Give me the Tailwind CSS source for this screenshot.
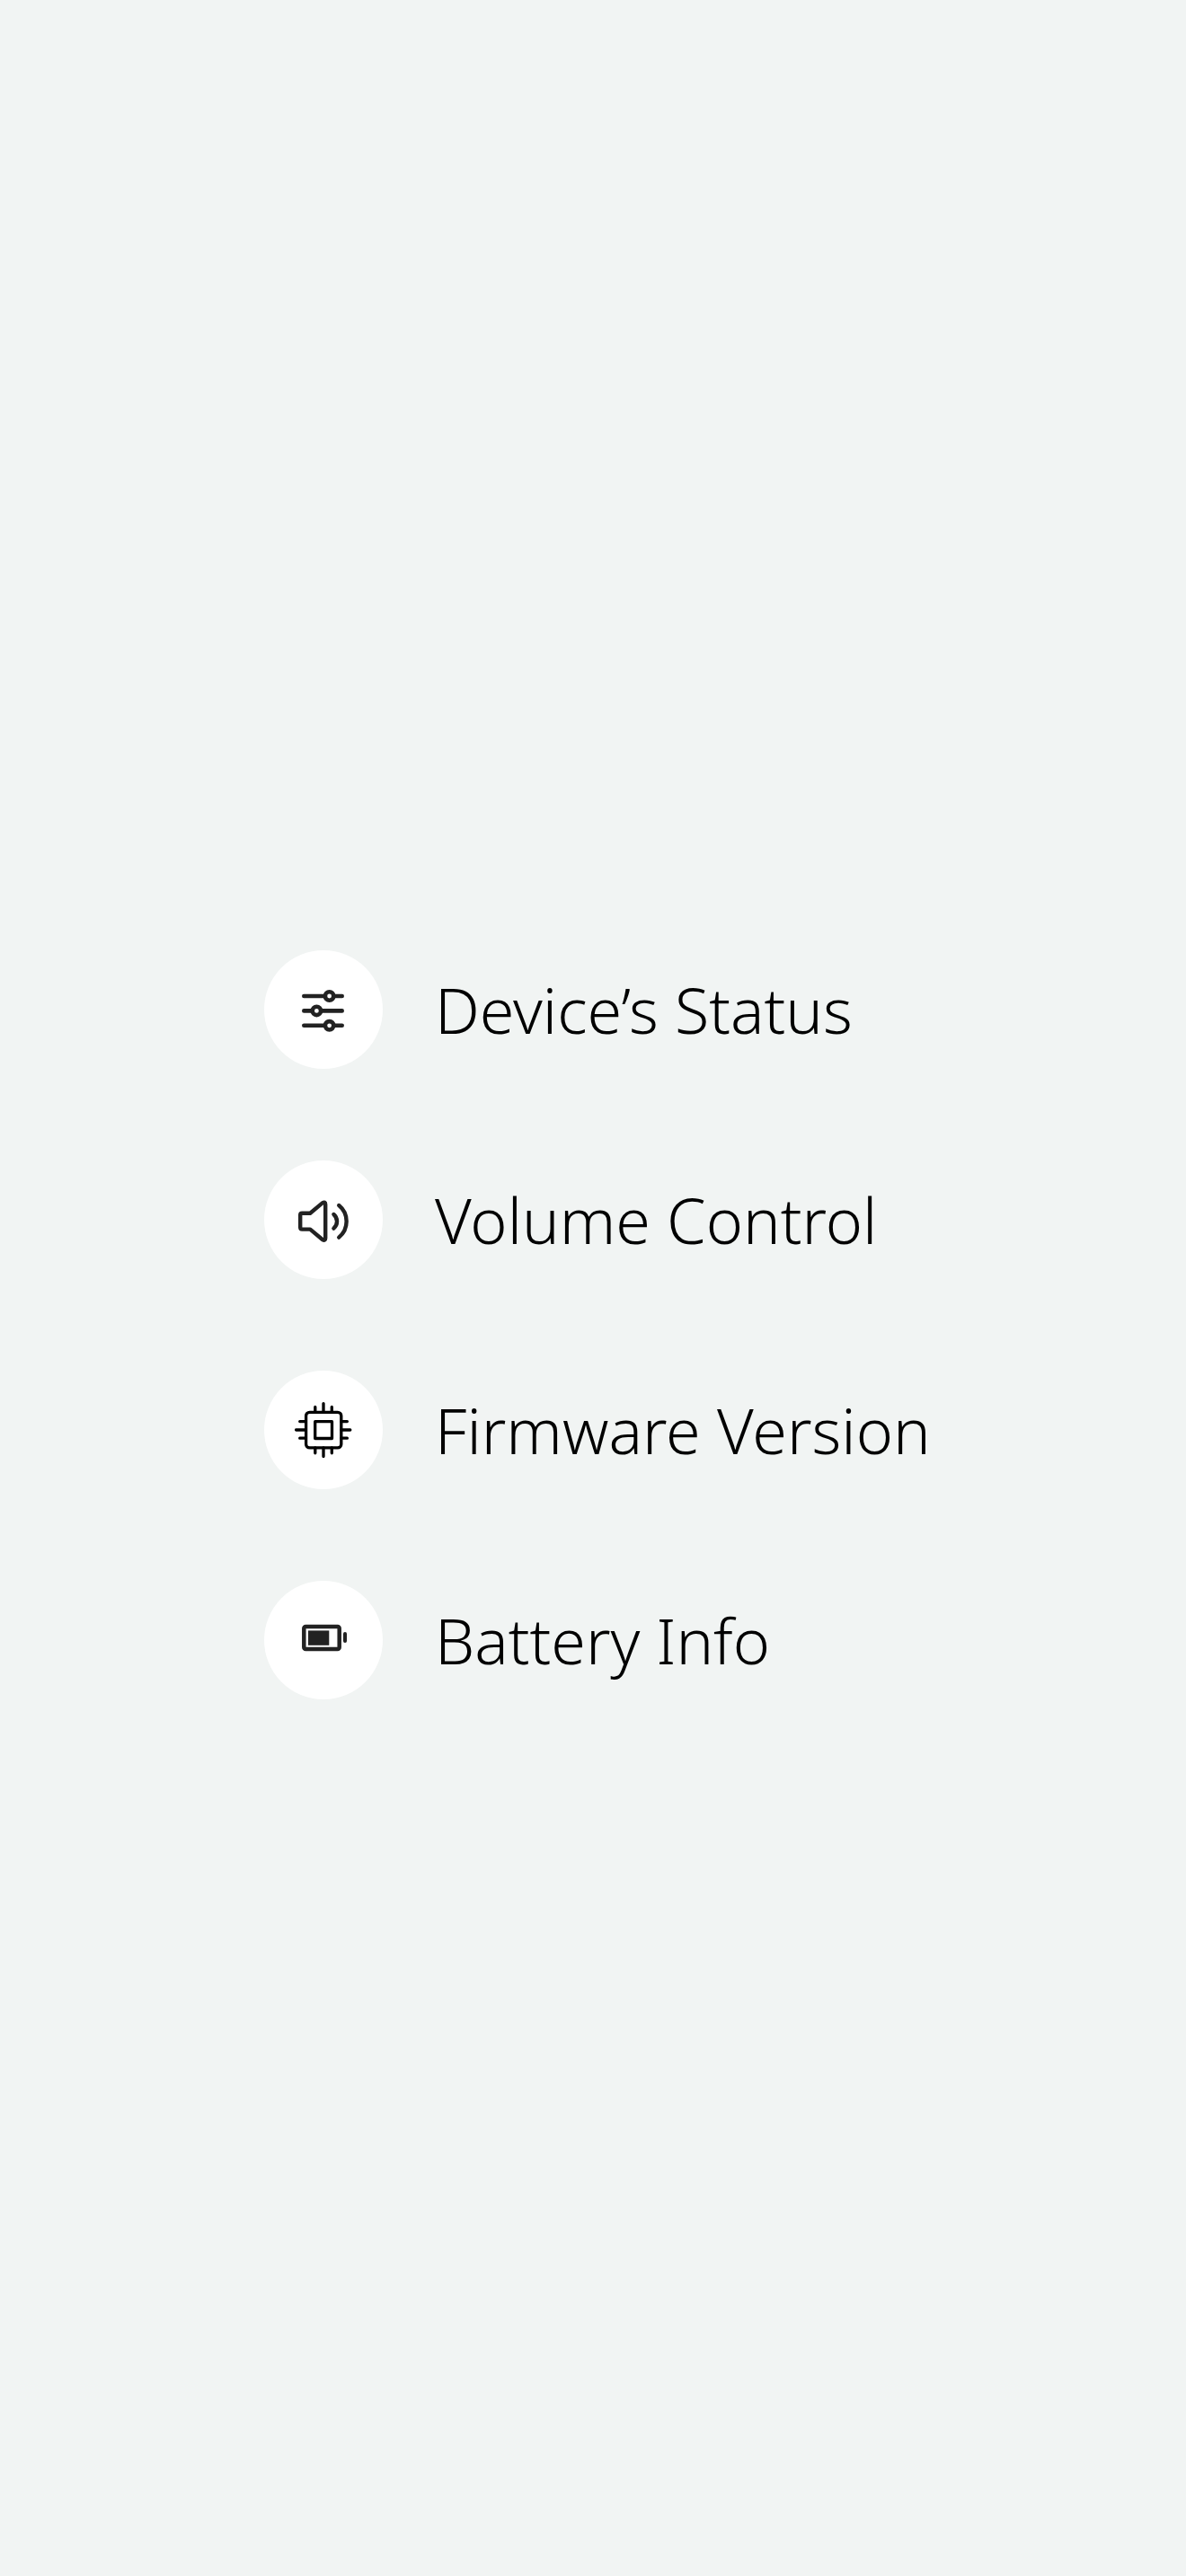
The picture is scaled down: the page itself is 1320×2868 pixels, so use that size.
<!DOCTYPE html>
<html lang="en">
<head>
<meta charset="utf-8">
<meta name="viewport" content="width=device-width, initial-scale=1">
<title>Device menu</title>
<script src="https://cdn.jsdelivr.net/npm/@tailwindcss/browser@4"></script>
</head>
<body class="min-h-screen bg-[#f1f4f3] font-['Noto_Sans',sans-serif] text-black">
<main class="flex min-h-screen flex-col items-center justify-center px-8 pt-[82px]">
  <nav aria-label="Device menu" class="w-full max-w-[732px]">
    <ul class="flex flex-col gap-[102px]">
      <li>
        <a href="#status" class="flex h-[132px] items-center gap-[58px]">
          <span class="flex size-[132px] shrink-0 items-center justify-center rounded-full bg-white">
            <svg class="size-16" viewBox="0 0 64 64" fill="none" stroke="#222" stroke-width="4.6" stroke-linecap="round" aria-hidden="true">
              <path d="M10.3 17H52.7M10.3 33.4H52.7M10.3 49.8H52.7"/>
              <g fill="#fff"><circle cx="38.6" cy="17" r="4.7"/><circle cx="24.4" cy="33.4" r="4.7"/><circle cx="38.6" cy="49.8" r="4.7"/></g>
            </svg>
          </span>
          <span class="text-[70px] font-light whitespace-nowrap">Device’s Status</span>
        </a>
      </li>
      <li>
        <a href="#volume" class="flex h-[132px] items-center gap-[58px]">
          <span class="flex size-[132px] shrink-0 items-center justify-center rounded-full bg-white">
            <svg class="size-16" viewBox="0 0 64 64" fill="none" stroke="#222" stroke-width="4.4" stroke-linecap="round" stroke-linejoin="round" aria-hidden="true">
              <path d="M8.2 24.8H17.2L30.8 13.4Q34.2 11.4 34.2 15V52.4Q34.2 56 30.8 54L17.2 42.6H8.2Q6.2 42.6 6.2 40.6V26.8Q6.2 24.8 8.2 24.8Z"/>
              <path d="M43.4 26A10.2 10.2 0 0 1 43.4 41.6M49.2 16A23 23 0 0 1 49.2 51.6"/>
            </svg>
          </span>
          <span class="text-[70px] font-light whitespace-nowrap">Volume Control</span>
        </a>
      </li>
      <li>
        <a href="#firmware" class="flex h-[132px] items-center gap-[58px]">
          <span class="flex size-[132px] shrink-0 items-center justify-center rounded-full bg-white">
            <svg class="size-16" viewBox="0 0 64 64" fill="none" stroke="#000" stroke-width="3.3" stroke-linecap="round" stroke-linejoin="round" aria-hidden="true">
              <rect x="12.6" y="12.3" width="39.2" height="39.6" rx="4"/>
              <rect x="22.7" y="22.7" width="18.8" height="18.8"/>
              <path d="M22.8 12V6.4M32 12V2.6M41.3 12V6.4M22.8 52V57.8M32 52V61.6M41.3 52V57.8M12 22.6H5.7M12 32H1.6M12 41.2H5.7M52 22.6H58.4M52 32H61.8M52 41.2H58.4"/>
            </svg>
          </span>
          <span class="text-[70px] font-light whitespace-nowrap">Firmware Version</span>
        </a>
      </li>
      <li>
        <a href="#battery" class="flex h-[132px] items-center gap-[58px]">
          <span class="flex size-[132px] shrink-0 items-center justify-center rounded-full bg-white">
            <svg class="size-16" viewBox="0 0 64 64" fill="none" aria-hidden="true">
              <rect x="10.3" y="16.9" width="39.4" height="25.2" rx="2" stroke="#222" stroke-width="4.5"/>
              <path fill="#222" d="M15 21.4H38.3V37.8H15Z"/>
              <rect x="54" y="23" width="4" height="12" rx="2" fill="#222"/>
            </svg>
          </span>
          <span class="text-[70px] font-light whitespace-nowrap">Battery Info</span>
        </a>
      </li>
    </ul>
  </nav>
</main>
</body>
</html>
